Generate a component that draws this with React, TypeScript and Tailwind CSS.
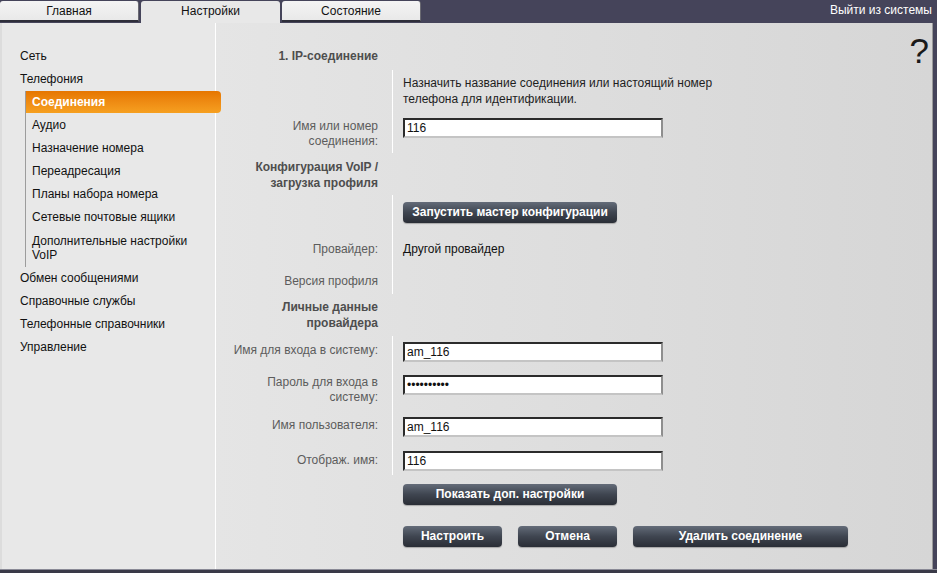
import React from 'react'

const font = { fontFamily: '"Liberation Sans", Arial, sans-serif' }

const tabs = [
  { label: 'Главная', active: false },
  { label: 'Настройки', active: true },
  { label: 'Состояние', active: false },
]

const subItems = [
  'Аудио',
  'Назначение номера',
  'Переадресация',
  'Планы набора номера',
  'Сетевые почтовые ящики',
]

function Field({ value, type = 'text' }: { value: string; type?: string }) {
  return (
    <input
      readOnly
      type={type}
      value={value}
      className="block w-[260px] h-[20px] bg-white border-2 border-t-[#2b2b2b] border-l-[#2b2b2b] border-r-[#8e8e8e] border-b-[#c4c4c4] px-[2px] text-[12px] text-[#111] outline-none"
      style={font}
    />
  )
}

function DarkButton({ children, w }: { children: React.ReactNode; w: string }) {
  return (
    <button
      className={`block ${w} h-[21px] rounded-[4px] bg-gradient-to-b from-[#646c79] via-[#3f4550] to-[#2a2e36] text-white text-[12px] font-bold leading-[21px] text-center shadow-[0_1px_1px_rgba(0,0,0,0.25)]`}
    >
      {children}
    </button>
  )
}

// label column + value column with the white divider line
function Row({
  label,
  h,
  pt,
  lpt,
  leading = 'leading-[16px]',
  children,
}: {
  label?: React.ReactNode
  h: string
  pt: string
  lpt?: string
  leading?: string
  children?: React.ReactNode
}) {
  return (
    <div className={`flex ${h}`}>
      <div className={`w-[162px] text-right text-[12px] text-[#5c5c5c] ${leading} ${lpt ?? pt}`}>{label}</div>
      <div className={`ml-[14px] border-l border-white pl-[10px] ${pt} flex-1`}>{children}</div>
    </div>
  )
}

function Header({ children, h, pt }: { children: React.ReactNode; h: string; pt: string }) {
  return (
    <div className={`flex ${h}`}>
      <div className={`w-[162px] text-right text-[12px] font-bold text-[#4e4e4e] leading-[16px] ${pt}`}>{children}</div>
    </div>
  )
}

export default function App() {
  return (
    <div className="w-[937px] h-[573px] bg-[#45445a] flex flex-col overflow-hidden" style={font}>
      {/* Top bar */}
      <div className="h-[23px] flex items-start pt-[1px] relative">
        <div className="flex gap-[2px]">
          {tabs.map(t =>
            t.active ? (
              <div
                key={t.label}
                className="w-[139px] h-[22px] bg-[#e8e8e8] rounded-t-[3px] text-[12px] text-[#111] text-center leading-[20px]"
              >
                {t.label}
              </div>
            ) : (
              <div
                key={t.label}
                className="w-[139px] h-[21px] bg-gradient-to-b from-[#f4f4f4] to-[#e9e9e9] rounded-t-[3px] border-r border-b-2 border-r-[#6a6a72] border-b-[#2e2e3a] text-[12px] text-[#111] text-center leading-[20px]"
              >
                {t.label}
              </div>
            )
          )}
        </div>
        <div className="ml-auto pr-[5px] text-[12px] text-white leading-[18px]">Выйти из системы</div>
      </div>

      {/* Content */}
      <div className="flex h-[546px] w-[933px] border-r border-[#9a9a9a]">
        {/* Sidebar */}
        <div className="w-[215px] bg-[#e8e8e8] border-l-2 border-[#dcdcdc] pt-[22px] text-[12px] text-[#111]">
          <div className="pl-[18px] h-[23px] leading-[23px]">Сеть</div>
          <div className="pl-[18px] h-[23px] leading-[23px]">Телефония</div>
          <div className="ml-[23px] border-l border-[#9c9c9c]">
            <div className="relative z-10 -mr-[6px] h-[22px] leading-[22px] pl-[6px] rounded-r-[4px] bg-gradient-to-b from-[#e67600] to-[#f6a020] text-white font-bold">
              Соединения
            </div>
            <div className="pt-[1px]">
              {subItems.map(s => (
                <div key={s} className="pl-[6px] h-[23px] leading-[23px]">
                  {s}
                </div>
              ))}
            </div>
            <div className="pl-[6px] pt-[5px] pb-[5px] leading-[14px]">
              Дополнительные настройки
              <br />
              VoIP
            </div>
          </div>
          <div className="pl-[18px] h-[23px] leading-[23px]">Обмен сообщениями</div>
          <div className="pl-[18px] h-[23px] leading-[23px]">Справочные службы</div>
          <div className="pl-[18px] h-[23px] leading-[23px]">Телефонные справочники</div>
          <div className="pl-[18px] h-[23px] leading-[23px]">Управление</div>
        </div>

        {/* Main */}
        <div className="relative flex-1 border-l border-white bg-gradient-to-r from-[#e5e5e5] to-[#d6d6d6] pt-[24px]">
          <div className="absolute right-[3px] top-[10px] text-[35px] leading-[36px] text-[#1a1a1a]">?</div>

          <Header h="h-[23px]" pt="pt-[1px]">1. IP-соединение</Header>
          <Row h="h-[40px]" pt="pt-[5px]">
            <div className="text-[12px] text-[#1e1e1e] leading-[16px] w-[340px]">
              Назначить название соединения или настоящий номер телефона для идентификации.
            </div>
          </Row>
          <Row
            h="h-[43px]"
            pt="pt-[8px]"
            lpt="pt-[9px]"
            leading="leading-[15px]"
            label={
              <>
                Имя или номер
                <br />
                соединения:
              </>
            }
          >
            <Field value="116" />
          </Row>
          <Header h="h-[42px]" pt="pt-[6px]">
            Конфигурация VoIP /
            <br />
            загрузка профиля
          </Header>
          <Row h="h-[38px]" pt="pt-[7px]">
            <DarkButton w="w-[214px]">Запустить мастер конфигурации</DarkButton>
          </Row>
          <Row h="h-[33px]" pt="pt-[8px]" label="Провайдер:">
            <div className="text-[12px] text-[#111] leading-[16px]">Другой провайдер</div>
          </Row>
          <Row h="h-[28px]" pt="pt-[7px]" label="Версия профиля" />
          <Header h="h-[42px]" pt="pt-[5px]">
            Личные данные
            <br />
            провайдера
          </Header>
          <Row h="h-[32px]" pt="pt-[6px]" label="Имя для входа в систему:">
            <Field value="am_116" />
          </Row>
          <Row
            h="h-[42px]"
            pt="pt-[7px]"
            lpt="pt-[7px]"
            leading="leading-[15px]"
            label={
              <>
                Пароль для входа в
                <br />
                систему:
              </>
            }
          >
            <Field value="1234567890" type="password" />
          </Row>
          <Row h="h-[34px]" pt="pt-[7px]" lpt="pt-[7px]" label="Имя пользователя:">
            <Field value="am_116" />
          </Row>
          <Row h="h-[31px]" pt="pt-[7px]" lpt="pt-[8px]" label="Отображ. имя:">
            <Field value="116" />
          </Row>

          <div className="ml-[187px] mt-[9px]">
            <DarkButton w="w-[214px]">Показать доп. настройки</DarkButton>
          </div>
          <div className="ml-[187px] mt-[21px] flex gap-[16px]">
            <DarkButton w="w-[99px]">Настроить</DarkButton>
            <DarkButton w="w-[99px]">Отмена</DarkButton>
            <DarkButton w="w-[215px]">Удалить соединение</DarkButton>
          </div>
        </div>
      </div>
      <div className="h-[4px] border-t border-[#8a8a96] bg-[#3a3a48]" />
    </div>
  )
}
